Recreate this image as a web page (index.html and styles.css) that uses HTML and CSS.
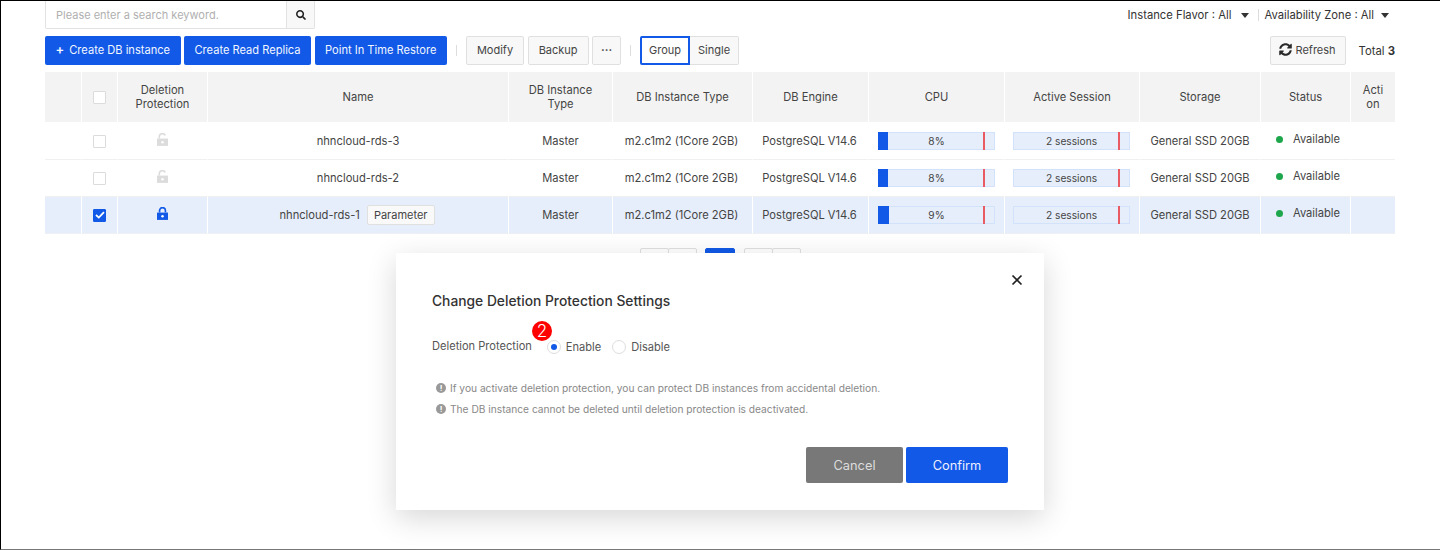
FILE: index.html
```html
<!DOCTYPE html>
<html lang="en">
<head>
<meta charset="utf-8">
<title>DB Instances</title>
<link rel="stylesheet" href="styles.css">
</head>
<body>
<div class="frame">
  <div class="top-row">
    <div class="search">
      <span class="search-text">Please enter a search keyword.</span>
      <span class="search-btn"><svg width="10" height="10" viewBox="0 0 512 512"><path fill="#222" d="M505 442.7L405.3 343c-4.500-4.500-10.600-7-17-7H372c27.600-35.300 44-79.700 44-128C416 93.100 322.900 0 208 0S0 93.100 0 208s93.100 208 208 208c48.300 0 92.700-16.400 128-44v16.300c0 6.400 2.500 12.500 7 17l99.700 99.700c9.400 9.400 24.600 9.400 33.900 0l28.300-28.300c9.400-9.400 9.400-24.600.1-34zM208 336c-70.700 0-128-57.200-128-128 0-70.700 57.200-128 128-128 70.700 0 128 57.200 128 128 0 70.700-57.200 128-128 128z"/></svg></span>
    </div>
    <div class="filters">
      <span class="filter">Instance Flavor : All</span><span class="caret"></span>
      <span class="filter-sep"></span>
      <span class="filter">Availability Zone : All</span><span class="caret near"></span>
    </div>
  </div>
  <div class="toolbar">
    <button class="btn primary"><span class="plus">+</span>Create DB instance</button>
    <button class="btn primary">Create Read Replica</button>
    <button class="btn primary">Point In Time Restore</button>
    <span class="tool-sep"></span>
    <button class="btn">Modify</button>
    <button class="btn">Backup</button>
    <button class="btn more">···</button>
    <span class="tool-sep"></span>
    <div class="toggle">
      <button class="btn seg active">Group</button><button class="btn seg last">Single</button>
    </div>
    <div class="toolbar-right">
      <button class="btn refresh"><svg width="13" height="13" viewBox="0 0 512 512"><path fill="#2a2a2a" d="M370.720 133.280C339.458 104.008 298.888 87.962 255.848 88c-77.458.068-144.328 53.178-162.791 126.850-1.344 5.363-6.122 9.150-11.651 9.150H24.103c-7.498 0-13.194-6.807-11.807-14.176C33.933 94.924 134.813 8 256 8c66.448 0 126.791 26.136 171.315 68.685L463.030 40.970C478.149 25.851 504 36.559 504 57.941V192c0 13.255-10.745 24-24 24H345.941c-21.382 0-32.090-25.851-16.971-40.971l41.750-41.749zM32 296h134.059c21.382 0 32.090 25.851 16.971 40.971l-41.750 41.750c31.262 29.273 71.835 45.319 114.876 45.280 77.418-.07 144.315-53.144 162.787-126.849 1.344-5.363 6.122-9.150 11.651-9.150h57.304c7.498 0 13.194 6.807 11.807 14.176C478.067 417.076 377.187 504 256 504c-66.448 0-126.791-26.136-171.315-68.685L48.970 471.030C33.851 486.149 8 475.441 8 454.059V320c0-13.255 10.745-24 24-24z"/></svg>Refresh</button>
      <span class="total">Total <b>3</b></span>
    </div>
  </div>
  <table class="grid">
    <thead>
      <tr>
        <th></th>
        <th><span class="check"></span></th>
        <th>Deletion<br>Protection</th>
        <th>Name</th>
        <th>DB Instance<br>Type</th>
        <th>DB Instance Type</th>
        <th>DB Engine</th>
        <th>CPU</th>
        <th>Active Session</th>
        <th>Storage</th>
        <th>Status</th>
        <th>Acti<br>on</th>
      </tr>
    </thead>
    <tbody>
      <tr>
        <td></td>
        <td><span class="check"></span></td>
        <td><svg class="lock" width="11" height="13" viewBox="0 0 12 14"><path d="M2.500 6V3.800a3.300 3.300 0 0 1 6.400-1.100" fill="none" stroke="#dcdcdc" stroke-width="1.800"/><path d="M0 6h12v8H0z" fill="#dcdcdc"/><circle cx="6" cy="10" r="1.400" fill="#fff"/></svg></td>
        <td>nhncloud-rds-3</td>
        <td>Master</td>
        <td>m2.c1m2 (1Core 2GB)</td>
        <td>PostgreSQL V14.6</td>
        <td><div class="meter"><span class="meter-fill"></span><span class="meter-mark"></span><span class="meter-label">8%</span></div></td>
        <td><div class="meter"><span class="meter-mark"></span><span class="meter-label">2 sessions</span></div></td>
        <td>General SSD 20GB</td>
        <td><span class="status"><span class="dot"></span>Available</span></td>
        <td></td>
      </tr>
      <tr>
        <td></td>
        <td><span class="check"></span></td>
        <td><svg class="lock" width="11" height="13" viewBox="0 0 12 14"><path d="M2.500 6V3.800a3.300 3.300 0 0 1 6.400-1.100" fill="none" stroke="#dcdcdc" stroke-width="1.800"/><path d="M0 6h12v8H0z" fill="#dcdcdc"/><circle cx="6" cy="10" r="1.400" fill="#fff"/></svg></td>
        <td>nhncloud-rds-2</td>
        <td>Master</td>
        <td>m2.c1m2 (1Core 2GB)</td>
        <td>PostgreSQL V14.6</td>
        <td><div class="meter"><span class="meter-fill"></span><span class="meter-mark"></span><span class="meter-label">8%</span></div></td>
        <td><div class="meter"><span class="meter-mark"></span><span class="meter-label">2 sessions</span></div></td>
        <td>General SSD 20GB</td>
        <td><span class="status"><span class="dot"></span>Available</span></td>
        <td></td>
      </tr>
      <tr class="selected">
        <td></td>
        <td><span class="check on"><svg width="10" height="8" viewBox="0 0 10 8"><path d="M1 4l2.800 2.600L9 1.200" fill="none" stroke="#fff" stroke-width="1.800"/></svg></span></td>
        <td><svg class="lock" width="11" height="13" viewBox="0 0 12 14"><path d="M2.800 6V3.800a3.200 3.200 0 0 1 6.400 0V6" fill="none" stroke="#1159e6" stroke-width="1.800"/><path d="M0 6h12v8H0z" fill="#1159e6"/><circle cx="6" cy="10" r="1.400" fill="#fff"/></svg></td>
        <td>nhncloud-rds-1<button class="param">Parameter</button></td>
        <td>Master</td>
        <td>m2.c1m2 (1Core 2GB)</td>
        <td>PostgreSQL V14.6</td>
        <td><div class="meter"><span class="meter-fill wide"></span><span class="meter-mark"></span><span class="meter-label">9%</span></div></td>
        <td><div class="meter"><span class="meter-mark"></span><span class="meter-label">2 sessions</span></div></td>
        <td>General SSD 20GB</td>
        <td><span class="status"><span class="dot"></span>Available</span></td>
        <td></td>
      </tr>
    </tbody>
  </table>
  <div class="pager">
    <span class="page"></span><span class="page joined"></span>
    <span class="page current"></span>
    <span class="page"></span><span class="page joined"></span>
  </div>
  <div class="modal">
    <svg class="close" width="12" height="12" viewBox="0 0 12 12"><path d="M1.500 1.500l9 9M10.500 1.500l-9 9" stroke="#222" stroke-width="1.700"/></svg>
    <h2 class="modal-title">Change Deletion Protection Settings</h2>
    <div class="form-row">
      <span class="form-label">Deletion Protection</span>
      <span class="radio on"></span><span class="radio-label">Enable</span>
      <span class="radio"></span><span class="radio-label">Disable</span>
      <span class="badge">2</span>
    </div>
    <p class="note"><span class="info">!</span>If you activate deletion protection, you can protect DB instances from accidental deletion.</p>
    <p class="note"><span class="info">!</span>The DB instance cannot be deleted until deletion protection is deactivated.</p>
    <div class="modal-actions">
      <button class="action cancel">Cancel</button>
      <button class="action confirm">Confirm</button>
    </div>
  </div>
</div>
</body>
</html>
```
FILE: styles.css
```css
* { box-sizing: border-box; }
html, body { margin: 0; padding: 0; }
body { font-family: Inter, "Liberation Sans", sans-serif; font-size: 11px; color: #333; background: #fff; }
button { font-family: inherit; }
.frame { position: relative; width: 1440px; height: 550px; border-top: 1px solid #000; border-left: 1px solid #000; border-bottom: 1px solid #777; padding: 0 45px 0 44px; overflow: hidden; }
.top-row { display: flex; justify-content: space-between; height: 35px; }
.search { display: flex; width: 270px; height: 28px; border: 1px solid #e2e2e2; border-top: 0; border-radius: 0 0 2px 2px; }
.search-text { flex: 1; padding: 0 10px; line-height: 29px; color: #b0b0b0; }
.search-btn { width: 28px; display: flex; align-items: center; justify-content: center; background: #f8f8f8; border-left: 1px solid #e2e2e2; }
.filters { display: flex; align-items: flex-start; padding: 7px 6px 0 0; font-size: 11.250px; color: #333; line-height: 14px; }
.caret { width: 0; height: 0; margin: 5px 0 0 10px; border: 4px solid transparent; border-top: 5px solid #333; border-bottom: 0; }
.caret.near { margin-left: 7px; }
.filter-sep { width: 1px; height: 12px; margin: 1px 5px 0 9px; background: #ddd; }
.toolbar { display: flex; align-items: center; height: 29px; gap: 3.500px; }
.btn { height: 29px; padding: 0 10px 2px; border: 1px solid #e0e0e0; border-radius: 2px; background: #f8f8f8; color: #444; font-size: 11px; white-space: nowrap; }
.btn.primary { padding: 0 10.500px 2px; background: #1159e6; border: 0; color: #f2f6ff; font-size: 11.100px; }
.plus { margin-right: 5px; font-size: 13px; font-weight: 600; line-height: 1; }
.tool-sep { width: 1px; height: 11px; margin: 0 5.500px; background: #ddd; }
.more { width: 29px; padding: 0 0 2px; font-weight: 700; }
.toggle { display: flex; }
.seg { padding: 0 0 2px; border-radius: 2px 0 0 2px; }
.seg.active { width: 50px; background: #fff; border: 2px solid #1159e6; }
.seg.last { width: 49px; border-left: 0; border-radius: 0 2px 2px 0; }
.toolbar-right { display: flex; align-items: center; margin-left: auto; }
.refresh { display: flex; align-items: center; gap: 4px; width: 76px; padding: 0 0 2px 8px; }
.total { margin-left: 13px; font-size: 11.300px; }
.grid { width: 1350px; margin-top: 7px; table-layout: fixed; border-collapse: separate; border-spacing: 0; }
.grid th, .grid td { padding: 0; text-align: center; vertical-align: middle; border-left: 1px solid #fff; font-size: 11.150px; font-weight: 400; color: #444; line-height: 14px; }
.grid th:first-child, .grid td:first-child { border-left: 0; width: 36px; }
.grid th { height: 51px; background: #f3f3f3; border-bottom: 1px solid #fff; }
.grid td { height: 37px; padding-bottom: 1px; border-bottom: 1px solid #f0f0f0; }
.grid td:nth-child(6), .grid td:nth-child(7), .selected td:nth-child(4) { padding-right: 2px; }
.grid th:nth-child(2) { width: 36px; }
.grid th:nth-child(3) { width: 90px; }
.grid th:nth-child(4) { width: 301px; }
.grid th:nth-child(5) { width: 104px; }
.grid th:nth-child(6) { width: 140px; }
.grid th:nth-child(7) { width: 116px; }
.grid th:nth-child(8) { width: 136px; }
.grid th:nth-child(9) { width: 135px; }
.grid th:nth-child(10) { width: 121px; }
.grid th:nth-child(11) { width: 90px; }
.selected td { background: #e6eefb; border-bottom-color: #eef0f3; }
.check { display: inline-flex; align-items: center; justify-content: center; width: 13px; height: 13px; border: 1px solid #dcdcdc; background: #fff; border-radius: 1px; vertical-align: middle; }
.check.on { background: #1159e6; border-color: #1159e6; }
.lock { display: inline-block; vertical-align: middle; margin-top: -3px; }
.param { height: 20px; margin-left: 7px; padding: 0 6px; border: 1px solid #e0e0e0; border-radius: 2px; background: #f9f9f9; color: #444; font-size: 11px; }
.meter { height: 18px; margin: 1px 9px 0; position: relative; background: #e6eefb; border: 1px solid #d3e2fb; text-align: center; line-height: 17px; font-size: 10.200px; }
.grid td:nth-child(9) .meter { margin: 1px 9px 0 8px; }
.meter-fill { position: absolute; left: -1px; top: -1px; bottom: -1px; width: 10px; background: #1159e6; }
.meter-fill.wide { width: 11px; }
.meter-mark { position: absolute; right: 9px; top: -1px; bottom: -1px; width: 2px; background: #ea5a62; }
.meter-label { position: relative; }
.status { display: inline-flex; align-items: center; margin-left: 5px; vertical-align: 3px; }
.dot { width: 7px; height: 7px; margin-right: 10px; border-radius: 50%; background: #1ea64c; }
.pager { display: flex; justify-content: flex-start; margin: 14px 0 0 595px; }
.page { width: 29px; height: 29px; border: 1px solid #e0e0e0; border-radius: 2px; background: #fff; }
.page.joined { margin-left: -1px; }
.page.current { width: 30px; margin: 0 9px 0 8px; background: #1159e6; border-color: #1159e6; }
.modal { position: absolute; left: 395px; top: 252px; width: 648px; height: 257px; background: #fff; padding: 40px 36px 0; border-radius: 1px; box-shadow: 0 8px 30px rgba(0,0,0,.16); }
.close { position: absolute; right: 21px; top: 21px; }
.modal-title { margin: 0; font-size: 13.800px; font-weight: 500; line-height: 17px; color: #333; }
.form-row { position: relative; display: flex; align-items: center; margin-top: 27px; height: 20px; color: #555; font-size: 11.100px; }
.form-label { margin-right: 15px; margin-top: -2px; }
.radio { position: relative; width: 14px; height: 14px; margin-right: 5px; border: 1px solid #ddd; border-radius: 50%; background: #fff; }
.radio.on::after { content: ""; position: absolute; left: 3px; top: 3px; width: 6px; height: 6px; border-radius: 50%; background: #1159e6; }
.radio-label { margin-right: 11px; }
.badge { position: absolute; left: 100px; top: -16px; width: 20px; height: 20px; border-radius: 50%; background: #f00; color: #fff; font-size: 17px; font-weight: 300; line-height: 20px; text-align: center; }
.note { display: flex; align-items: center; margin: 0 0 6px 4px; height: 15px; font-size: 10.200px; color: #888; }
.form-row + .note { margin-top: 23px; }
.info { display: inline-block; width: 10px; height: 10px; margin-right: 4px; border-radius: 50%; background: #999; color: #fff; font-size: 8px; font-weight: 700; line-height: 10px; text-align: center; }
.modal-actions { display: flex; justify-content: flex-end; gap: 3px; margin-top: 31px; }
.action { height: 36px; border: 0; border-radius: 2px; font-size: 12.800px; color: #eef; }
.cancel { width: 97px; background: #787878; color: #ddd; }
.confirm { width: 102px; background: #1159e6; }
```
